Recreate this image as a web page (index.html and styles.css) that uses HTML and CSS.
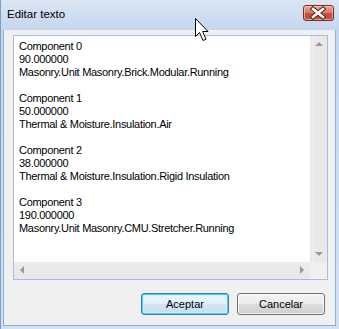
FILE: index.html
```html
<!DOCTYPE html>
<html lang="es">
<head>
<meta charset="utf-8">
<title>Editar texto</title>
<link rel="stylesheet" href="styles.css">
</head>
<body>
<div class="window">
  <div class="titlebar">
    <span class="title">Editar texto</span>
    <div class="close">
      <svg width="29" height="14" viewBox="0 0 29 14">
        <path d="M9 3 L19 11 M19 3 L9 11" stroke="#5b2019" stroke-width="4.6" stroke-linecap="square" fill="none"/>
        <path d="M9 3 L19 11 M19 3 L9 11" stroke="#ffffff" stroke-width="2.6" stroke-linecap="square" fill="none"/>
      </svg>
    </div>
  </div>
  <div class="client">
    <div class="edit">
      <div class="text">Component 0
90.000000
Masonry.Unit Masonry.Brick.Modular.Running

Component 1
50.000000
Thermal &amp; Moisture.Insulation.Air

Component 2
38.000000
Thermal &amp; Moisture.Insulation.Rigid Insulation

Component 3
190.000000
Masonry.Unit Masonry.CMU.Stretcher.Running</div>
      <div class="vscroll">
        <span class="arrow up"></span>
        <span class="arrow down"></span>
      </div>
      <div class="hscroll">
        <span class="arrow left"></span>
        <span class="arrow right"></span>
      </div>
      <div class="corner"></div>
    </div>
    <div class="buttons">
      <button class="btn btn-default">Aceptar</button>
      <button class="btn">Cancelar</button>
    </div>
  </div>
  <svg class="cursor" width="14" height="24" viewBox="0 0 14 24">
    <path d="M0.5 0.5 L0.5 18.5 L4.5 14.5 L8 22.5 L11 21.2 L7.6 13.5 L13 13.5 Z" fill="#ffffff" stroke="#000000" stroke-width="1" stroke-linejoin="miter"/>
  </svg>
</div>
</body>
</html>
```

FILE: styles.css
```css
* { box-sizing: border-box; }
html, body { margin: 0; padding: 0; background: #ffffff; }
body { width: 339px; height: 329px; overflow: hidden; }

.window {
  position: relative;
  width: 339px;
  height: 329px;
  display: flex;
  flex-direction: column;
  padding: 0 3px 3px 2px;
  border-left: 1px solid #7f9dc0;
  background: linear-gradient(#dae6f4 0px, #c4d7ee 30px, #c9dbf0 120px, #d3e2f3 329px);
  font-family: "Liberation Sans", Arial, sans-serif;
}

.titlebar {
  height: 30px;
  display: flex;
  justify-content: space-between;
  align-items: flex-start;
  flex: none;
}
.title {
  margin: 6px 0 0 4px;
  font-size: 11.5px;
  line-height: 16px;
  color: #000000;
}
.close {
  margin: 5px 2px 0 0;
  width: 31px;
  height: 16px;
  border: 1px solid #7e2b22;
  border-radius: 3px;
  background: linear-gradient(#e6a597 0%, #d8806e 45%, #c54f3b 55%, #c4553f 100%);
  box-shadow: inset 0 0 0 1px rgba(255, 220, 210, 0.55);
  display: flex;
}

.client {
  flex: 1;
  background: #f0f0f0;
  border: 1px solid #8caed6;
  border-top: none;
  padding: 5px 8px 10px 9px;
  display: flex;
  flex-direction: column;
}

.edit {
  width: 315px;
  height: 245px;
  border: 1px solid #a4bfdc;
  background: #ffffff;
  display: grid;
  grid-template-columns: 1fr 17px;
  grid-template-rows: 1fr 17px;
}
.text {
  padding: 4px 0 0 5px;
  font-family: "Liberation Sans", Arial, sans-serif;
  font-size: 11px;
  letter-spacing: -0.3px;
  line-height: 13px;
  white-space: pre;
  color: #000000;
  overflow: hidden;
}
.vscroll {
  position: relative;
  background: linear-gradient(90deg, #e3e3e3 0px, #f1f1f1 1px, #eaeaea 3px, #e8e8e8 100%);
  border-left: 1px solid #e6e6e6;
}
.hscroll {
  position: relative;
  background: linear-gradient(#e3e3e3 0px, #f1f1f1 1px, #eaeaea 3px, #e8e8e8 100%);
}
.corner { background: #f0f0f0; }

.arrow {
  position: absolute;
  width: 0;
  height: 0;
  border: 4px solid transparent;
}
.arrow.up { left: 4px; top: 6px; border-bottom-color: #9a9a9a; border-top-width: 0; }
.arrow.down { left: 4px; bottom: 6px; border-top-color: #9a9a9a; border-bottom-width: 0; }
.arrow.left { left: 6px; top: 4px; border-right-color: #9a9a9a; border-left-width: 0; }
.arrow.right { right: 6px; top: 4px; border-left-color: #9a9a9a; border-right-width: 0; }

.buttons {
  margin-top: 13px;
  display: flex;
  justify-content: flex-end;
  gap: 8px;
  padding-right: 2px;
}
.btn {
  width: 88px;
  height: 22px;
  padding: 0;
  margin: 0;
  font-family: "Liberation Sans", Arial, sans-serif;
  font-size: 11px;
  color: #000000;
  border: 1px solid #707070;
  border-radius: 3px;
  background: linear-gradient(#f2f2f2 0%, #ebebeb 50%, #dddddd 51%, #cfcfcf 100%);
  box-shadow: inset 0 0 0 1px rgba(255, 255, 255, 0.7);
}
.btn-default {
  border-color: #3c7fb1;
  box-shadow: inset 0 0 0 1px #4ad0f8, inset 0 0 0 2px rgba(210, 240, 252, 0.8);
  background: linear-gradient(#eef7fc 0%, #e3f0f9 50%, #d2e6f5 51%, #c6def0 100%);
}

.cursor {
  position: absolute;
  left: 194px;
  top: 18px;
}
```
